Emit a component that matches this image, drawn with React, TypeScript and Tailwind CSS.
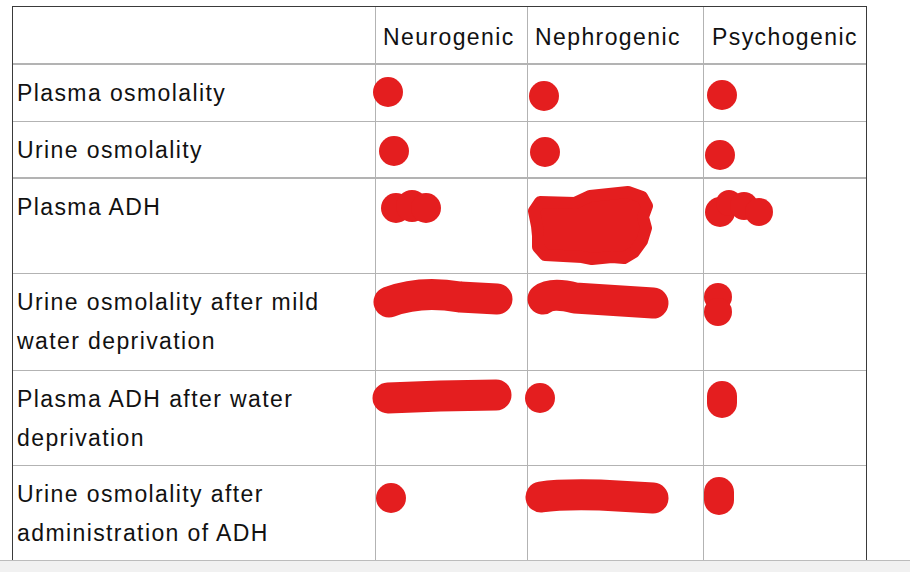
import React from "react";

const font = { fontFamily: '"Liberation Sans", Arial, sans-serif' };

type Row = { label: React.ReactNode; h: string; border: string };

const rows: Row[] = [
  { label: "Plasma osmolality", h: "h-[57px]", border: "border-b" },
  { label: "Urine osmolality", h: "h-[57px]", border: "border-b-2" },
  { label: "Plasma ADH", h: "h-[95px]", border: "border-b" },
  {
    label: (
      <>
        Urine osmolality after mild
        <br />
        water deprivation
      </>
    ),
    h: "h-[97px]",
    border: "border-b",
  },
  {
    label: (
      <>
        Plasma ADH after water
        <br />
        deprivation
      </>
    ),
    h: "h-[95px]",
    border: "border-b",
  },
  {
    label: (
      <>
        Urine osmolality after
        <br />
        administration of ADH
      </>
    ),
    h: "h-[94px]",
    border: "",
  },
];

function Marks() {
  const red = "#e41e1f";
  return (
    <svg
      className="pointer-events-none absolute left-0 top-0"
      width="910"
      height="572"
      viewBox="0 0 910 572"
    >
      <g fill={red}>
        <circle cx="388" cy="92" r="15" />
        <circle cx="544" cy="96" r="15" />
        <circle cx="722" cy="95" r="15" />
        <circle cx="394" cy="151" r="15" />
        <circle cx="545" cy="152" r="15" />
        <circle cx="720" cy="155" r="15" />
        <circle cx="540" cy="398" r="15" />
        <circle cx="391" cy="498" r="15" />
        <circle cx="396" cy="208" r="15" />
        <circle cx="412" cy="206" r="16" />
        <circle cx="426" cy="208" r="15" />
        <circle cx="720" cy="212" r="15" />
        <circle cx="729" cy="203" r="13" />
        <circle cx="744" cy="206" r="14" />
        <circle cx="759" cy="212" r="14" />
        <circle cx="718" cy="297" r="14" />
        <circle cx="718" cy="312" r="14" />
      </g>
      <g fill="none" stroke={red} strokeLinecap="round" strokeLinejoin="round">
        <path d="M389 302 Q420 290 460 297 L497 299" strokeWidth="31" />
        <path d="M543 299 Q552 292 575 298 L653 303" strokeWidth="31" />
        <path d="M388 398 L440 396 L496 395" strokeWidth="31" />
        <path d="M722 396 L722 403" strokeWidth="30" />
        <path d="M541 497 Q560 494 600 495 L653 498" strokeWidth="31" />
        <path d="M719 492 L719 500" strokeWidth="30" />
      </g>
      <polygon
        fill={red}
        stroke={red}
        strokeWidth="12"
        strokeLinejoin="round"
        points="540,202 575,203 590,196 628,192 642,197 647,206 643,217 646,228 642,241 634,252 624,258 612,257 592,259 582,257 545,255 538,247 538,236 537,226 534,211"
      />
    </svg>
  );
}

export default function App() {
  const cellText = "text-[23px] leading-[39px] tracking-[1.4px] text-[#111]";
  return (
    <div
      className="relative flex h-[572px] w-[910px] flex-col overflow-hidden bg-white"
      style={font}
    >
      <div className="h-[560px] pl-[12px] pt-[6px]">
        <div className="w-[855px] border-x border-t border-x-[#3a3a3a] border-t-[#3a3a3a]">
          <div className="grid grid-cols-[363px_152px_176px_162px]">
            <div className="h-[58px] border-b-2 border-r border-[#b3b3b3]" />
            <div className={`h-[58px] border-b-2 border-r border-[#b3b3b3] pl-[7px] pt-[11px] ${cellText}`}>
              Neurogenic
            </div>
            <div className={`h-[58px] border-b-2 border-r border-[#b3b3b3] pl-[7px] pt-[11px] ${cellText}`}>
              Nephrogenic
            </div>
            <div className={`h-[58px] border-b-2 border-[#b3b3b3] pl-[8px] pt-[11px] ${cellText}`}>
              Psychogenic
            </div>
            {rows.map((r, i) => (
              <React.Fragment key={i}>
                <div
                  className={`${r.h} ${r.border} border-r border-[#b3b3b3] pl-[4px] pt-[9px] ${cellText}`}
                >
                  {r.label}
                </div>
                <div className={`${r.h} ${r.border} border-r border-[#b3b3b3]`} />
                <div className={`${r.h} ${r.border} border-r border-[#b3b3b3]`} />
                <div className={`${r.h} ${r.border} border-[#b3b3b3]`} />
              </React.Fragment>
            ))}
          </div>
        </div>
      </div>
      <div className="h-[12px] border-t border-[#bcbcbc] bg-[#f1f1f1]" />
      <Marks />
    </div>
  );
}
